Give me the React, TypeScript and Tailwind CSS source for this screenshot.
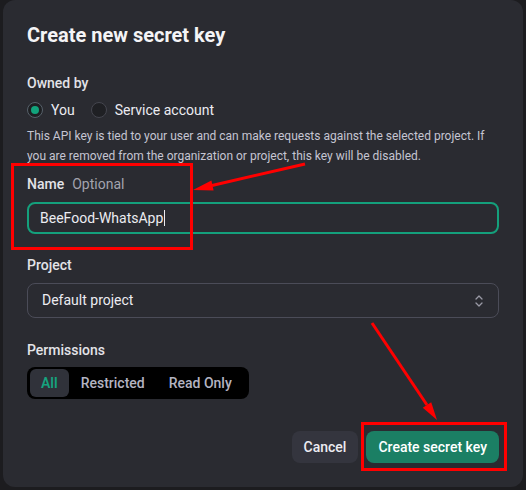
import { useState } from 'react';

function Radio({ checked, label }: { checked: boolean; label: string }) {
  return (
    <label className="flex items-center gap-2 cursor-pointer">
      <span
        className={
          checked
            ? 'flex h-4 w-4 items-center justify-center rounded-full border border-[#56606a] bg-[#1e2023]'
            : 'flex h-4 w-4 items-center justify-center rounded-full border border-[#45464f] bg-[#1f2024]'
        }
      >
        {checked && <span className="h-2 w-2 rounded-full bg-[#12a37c]" />}
      </span>
      <span className="text-[14px] text-[#ececf1]">{label}</span>
    </label>
  );
}

function ChevronsUpDown() {
  return (
    <svg width="8" height="12" viewBox="0 0 8 12" fill="none" stroke="#9a9aa6" strokeWidth="1.3" strokeLinecap="round" strokeLinejoin="round">
      <path d="M1 4 L4 1 L7 4" />
      <path d="M1 8 L4 11 L7 8" />
    </svg>
  );
}

export default function App() {
  const [owner, setOwner] = useState<'you' | 'service'>('you');
  const [permission, setPermission] = useState('All');
  const permissions = ['All', 'Restricted', 'Read Only'];

  return (
    <div className="relative h-[490px] w-[526px] overflow-hidden bg-[#1c1c1f] font-['Roboto','Liberation_Sans',sans-serif]">
      <div className="ml-[3px] flex h-[487px] w-[520px] flex-col rounded-[12px] bg-[#2a2b31] px-6 pt-[21px]">
        <h3 className="text-[20px] font-bold leading-[28px] text-[#f4f4f6]">Create new secret key</h3>

        <div className="mt-6 text-[14px] font-medium leading-5 text-[#e3e3e8]">Owned by</div>
        <div className="mt-[5px] flex h-6 items-center gap-4">
          <div onClick={() => setOwner('you')}>
            <Radio checked={owner === 'you'} label="You" />
          </div>
          <div onClick={() => setOwner('service')}>
            <Radio checked={owner === 'service'} label="Service account" />
          </div>
        </div>
        <p className="mt-1 text-[12px] leading-5 text-[#c5c5d2]">
          This API key is tied to your user and can make requests against the selected project. If you are removed from the organization or project, this key will be disabled.
        </p>

        <div className="mt-2 flex items-center gap-2 text-[14px] leading-5">
          <span className="font-medium text-[#e3e3e8]">Name</span>
          <span className="text-[#a3a3ae]">Optional</span>
        </div>
        <div className="mt-2 flex h-8 items-center rounded-[8px] border-2 border-[#14a07c] px-[11px]">
          <span className="text-[14px] text-[#ececf1]">BeeFood-WhatsApp</span>
          <span className="ml-px h-4 w-px bg-[#ececf1]" />
        </div>

        <div className="mt-[21px] text-[14px] font-medium leading-5 text-[#e3e3e8]">Project</div>
        <div className="mt-2 flex h-[35px] items-center justify-between rounded-[8px] border border-[#4b4c58] pl-[14px] pr-[15px]">
          <span className="text-[14px] text-[#ececf1]">Default project</span>
          <ChevronsUpDown />
        </div>

        <div className="mt-[22px] text-[14px] font-medium leading-5 text-[#e3e3e8]">Permissions</div>
        <div className="mt-[7px] flex h-8 w-[222px] items-center rounded-[8px] bg-black p-[2px] pl-[3px]">
          {permissions.map((p) => (
            <button
              key={p}
              onClick={() => setPermission(p)}
              className={
                p === permission
                  ? 'h-7 rounded-[6px] bg-[#30323a] px-[11px] text-[14px] font-semibold text-[#16a37f]'
                  : 'h-7 rounded-[6px] px-3 text-[14px] font-medium text-[#b4b4c2]'
              }
            >
              {p}
            </button>
          ))}
        </div>

        <div className="mt-8 flex justify-end gap-2">
          <button className="h-8 rounded-[8px] bg-[#34353e] px-3 text-[14px] font-medium text-[#ececf1]">Cancel</button>
          <button className="h-8 rounded-[8px] bg-[#1b7f64] px-3 text-[14px] font-medium text-white">Create secret key</button>
        </div>
      </div>

      {/* red annotations drawn over the screenshot */}
      <div className="pointer-events-none absolute left-[11px] top-[163px] h-[87px] w-[182px] border-[3px] border-[#ff0000]" />
      <div className="pointer-events-none absolute left-[361px] top-[422px] h-[49px] w-[146px] border-[3px] border-[#ff0000]" />
      <svg className="pointer-events-none absolute left-0 top-0" width="526" height="490" viewBox="0 0 526 490">
        <line x1="305" y1="164" x2="212" y2="185.5" stroke="#ff0000" strokeWidth="3" />
        <polygon points="193,190 213.6,190.4 211.4,180.6" fill="#ff0000" />
        <line x1="372" y1="323" x2="427" y2="405" stroke="#ff0000" strokeWidth="3" />
        <polygon points="437,420 422.8,407.8 431.2,402.2" fill="#ff0000" />
      </svg>
    </div>
  );
}
